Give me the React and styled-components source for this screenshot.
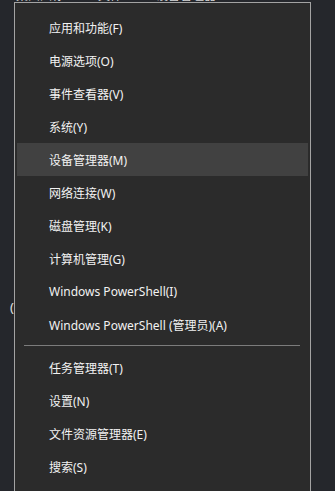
import React from "react";
import styled, { createGlobalStyle } from "styled-components";

const GlobalStyle = createGlobalStyle`
  html, body {
    margin: 0;
    padding: 0;
    background: #25272c;
  }
`;

const Desktop = styled.div`
  position: relative;
  width: 335px;
  height: 491px;
  overflow: hidden;
  background: #25272c;
  font-family: "Segoe UI", "Noto Sans", "Noto Sans CJK SC", sans-serif;
`;

const BackdropRow = styled.div`
  display: flex;
  gap: 34px;
  padding-left: 16px;
  margin-top: -11px;
  color: #d8d8d8;
  font-size: 12px;
  line-height: 14px;
`;

const BackdropCell = styled.span`
  white-space: nowrap;
`;

const StrayGlyph = styled.span`
  position: absolute;
  left: 10px;
  top: 298px;
  color: #e0e0e0;
  font-size: 13px;
`;

const Menu = styled.div`
  position: absolute;
  left: 14px;
  top: 2px;
  width: 297px;
  box-sizing: border-box;
  border: 1px solid #a3a3a3;
  background: #2b2b2b;
  padding: 8px 2px;
`;

const Item = styled.div`
  height: 33px;
  display: flex;
  align-items: center;
  padding-left: 32px;
  color: #f2f2f2;
  font-size: 12px;
  white-space: nowrap;
  background: ${(p) => (p.$active ? "#414141" : "transparent")};
`;

const Separator = styled.div`
  height: 1px;
  margin: 4px 8px 5px 7px;
  background: #7c7c7c;
`;

const groups = [
  [
    "应用和功能(F)",
    "电源选项(O)",
    "事件查看器(V)",
    "系统(Y)",
    "设备管理器(M)",
    "网络连接(W)",
    "磁盘管理(K)",
    "计算机管理(G)",
    "Windows PowerShell(I)",
    "Windows PowerShell (管理员)(A)",
  ],
  ["任务管理器(T)", "设置(N)", "文件资源管理器(E)", "搜索(S)", "关机或注销(U)"],
];

const App = () => {
  return (
    <>
      <GlobalStyle />
      <Desktop>
        <BackdropRow>
          <BackdropCell>桌面图标</BackdropCell>
          <BackdropCell>文件</BackdropCell>
          <BackdropCell>设备管理器</BackdropCell>
        </BackdropRow>
        <StrayGlyph>(</StrayGlyph>
        <Menu>
          {groups.map((group, gi) => (
            <React.Fragment key={gi}>
              {gi > 0 && <Separator />}
              {group.map((label) => (
                <Item key={label} $active={label === "设备管理器(M)"}>
                  {label}
                </Item>
              ))}
            </React.Fragment>
          ))}
        </Menu>
      </Desktop>
    </>
  );
};

export default App;
